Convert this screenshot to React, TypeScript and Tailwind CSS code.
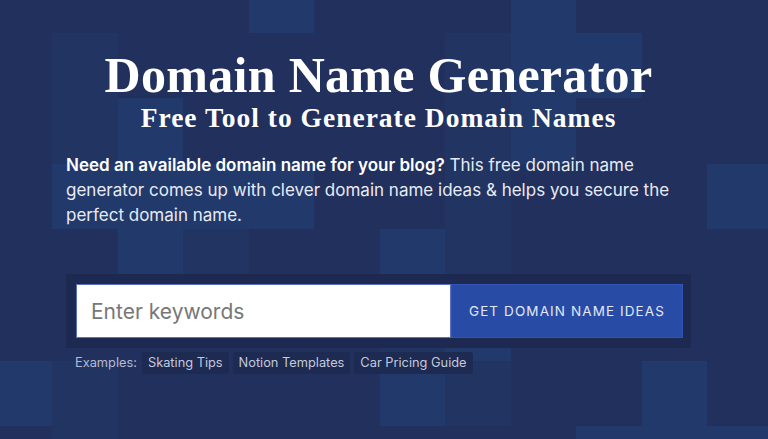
const shades: Record<string, string> = {
  b: "bg-[#21305d]",
  m: "bg-[#213462]",
  l: "bg-[#22396b]",
};

// background tiles, one string per row, one letter per column
const tiles = [
  "bbbblbbblbbb",
  "bmbbbbbmllbb",
  "bmlbbbbmlbbb",
  "bllllbbmbbbl",
  "bblmbblmbbbb",
  "bbbbbbmlbbbb",
  "lmbbbblmbblb",
  "bmbbbbbbblll",
];

const examples = ["Skating Tips", "Notion Templates", "Car Pricing Guide"];

export default function App() {
  return (
    <div className="relative h-[439px] w-[768px] overflow-hidden bg-[#21305d] font-['Inter',sans-serif] text-white">
      <div className="absolute left-[-13.5px] top-[-33px] grid grid-cols-[repeat(12,65.5px)] grid-rows-[repeat(8,65.6px)]">
        {tiles.flatMap((row, r) =>
          row.split("").map((c, i) => <div key={`${r}-${i}`} className={shades[c]} />)
        )}
      </div>

      <div className="relative ml-[66px] w-[625px] pt-[49px]">
        <h1 className="text-center font-['Liberation_Serif',serif] text-[50px] font-bold leading-[52px] tracking-[0.3px]">
          Domain Name Generator
        </h1>
        <h2 className="mt-[2px] text-center font-['Liberation_Serif',serif] text-[27.5px] font-bold leading-[30px] tracking-[1px]">
          Free Tool to Generate Domain Names
        </h2>

        <p className="mt-[20px] text-[17px] leading-[25px] text-[#e8ebf3]">
          <strong className="font-semibold text-white">Need an available domain name for your blog?</strong>{" "}
          This free domain name generator comes up with clever domain name ideas &amp; helps you secure the perfect
          domain name.
        </p>

        <div className="mt-[46px] flex bg-[#1d2950] py-[10px] pl-[10px] pr-[8px]">
          <input
            placeholder="Enter keywords"
            className="h-[54px] w-[375px] border border-[#5b70c2] bg-white px-[14px] text-[21px] text-gray-800 outline-none placeholder:text-[#777777]"
          />
          <button className="h-[54px] flex-1 border border-[#2f56b5] bg-[#284ba6] text-[13.5px] font-normal tracking-[1.1px] text-[#e3e8f7]">
            GET DOMAIN NAME IDEAS
          </button>
        </div>

        <div className="mt-[4px] flex items-center gap-[4px] pl-[9px] text-[12.8px] text-[#c3c9dc]">
          <span className="mr-[1px] text-[#b4bcd4]">Examples:</span>
          {examples.map((e) => (
            <span key={e} className="rounded-[3px] bg-[#1d2a52] px-[6px] leading-[22px]">
              {e}
            </span>
          ))}
        </div>
      </div>
    </div>
  );
}
